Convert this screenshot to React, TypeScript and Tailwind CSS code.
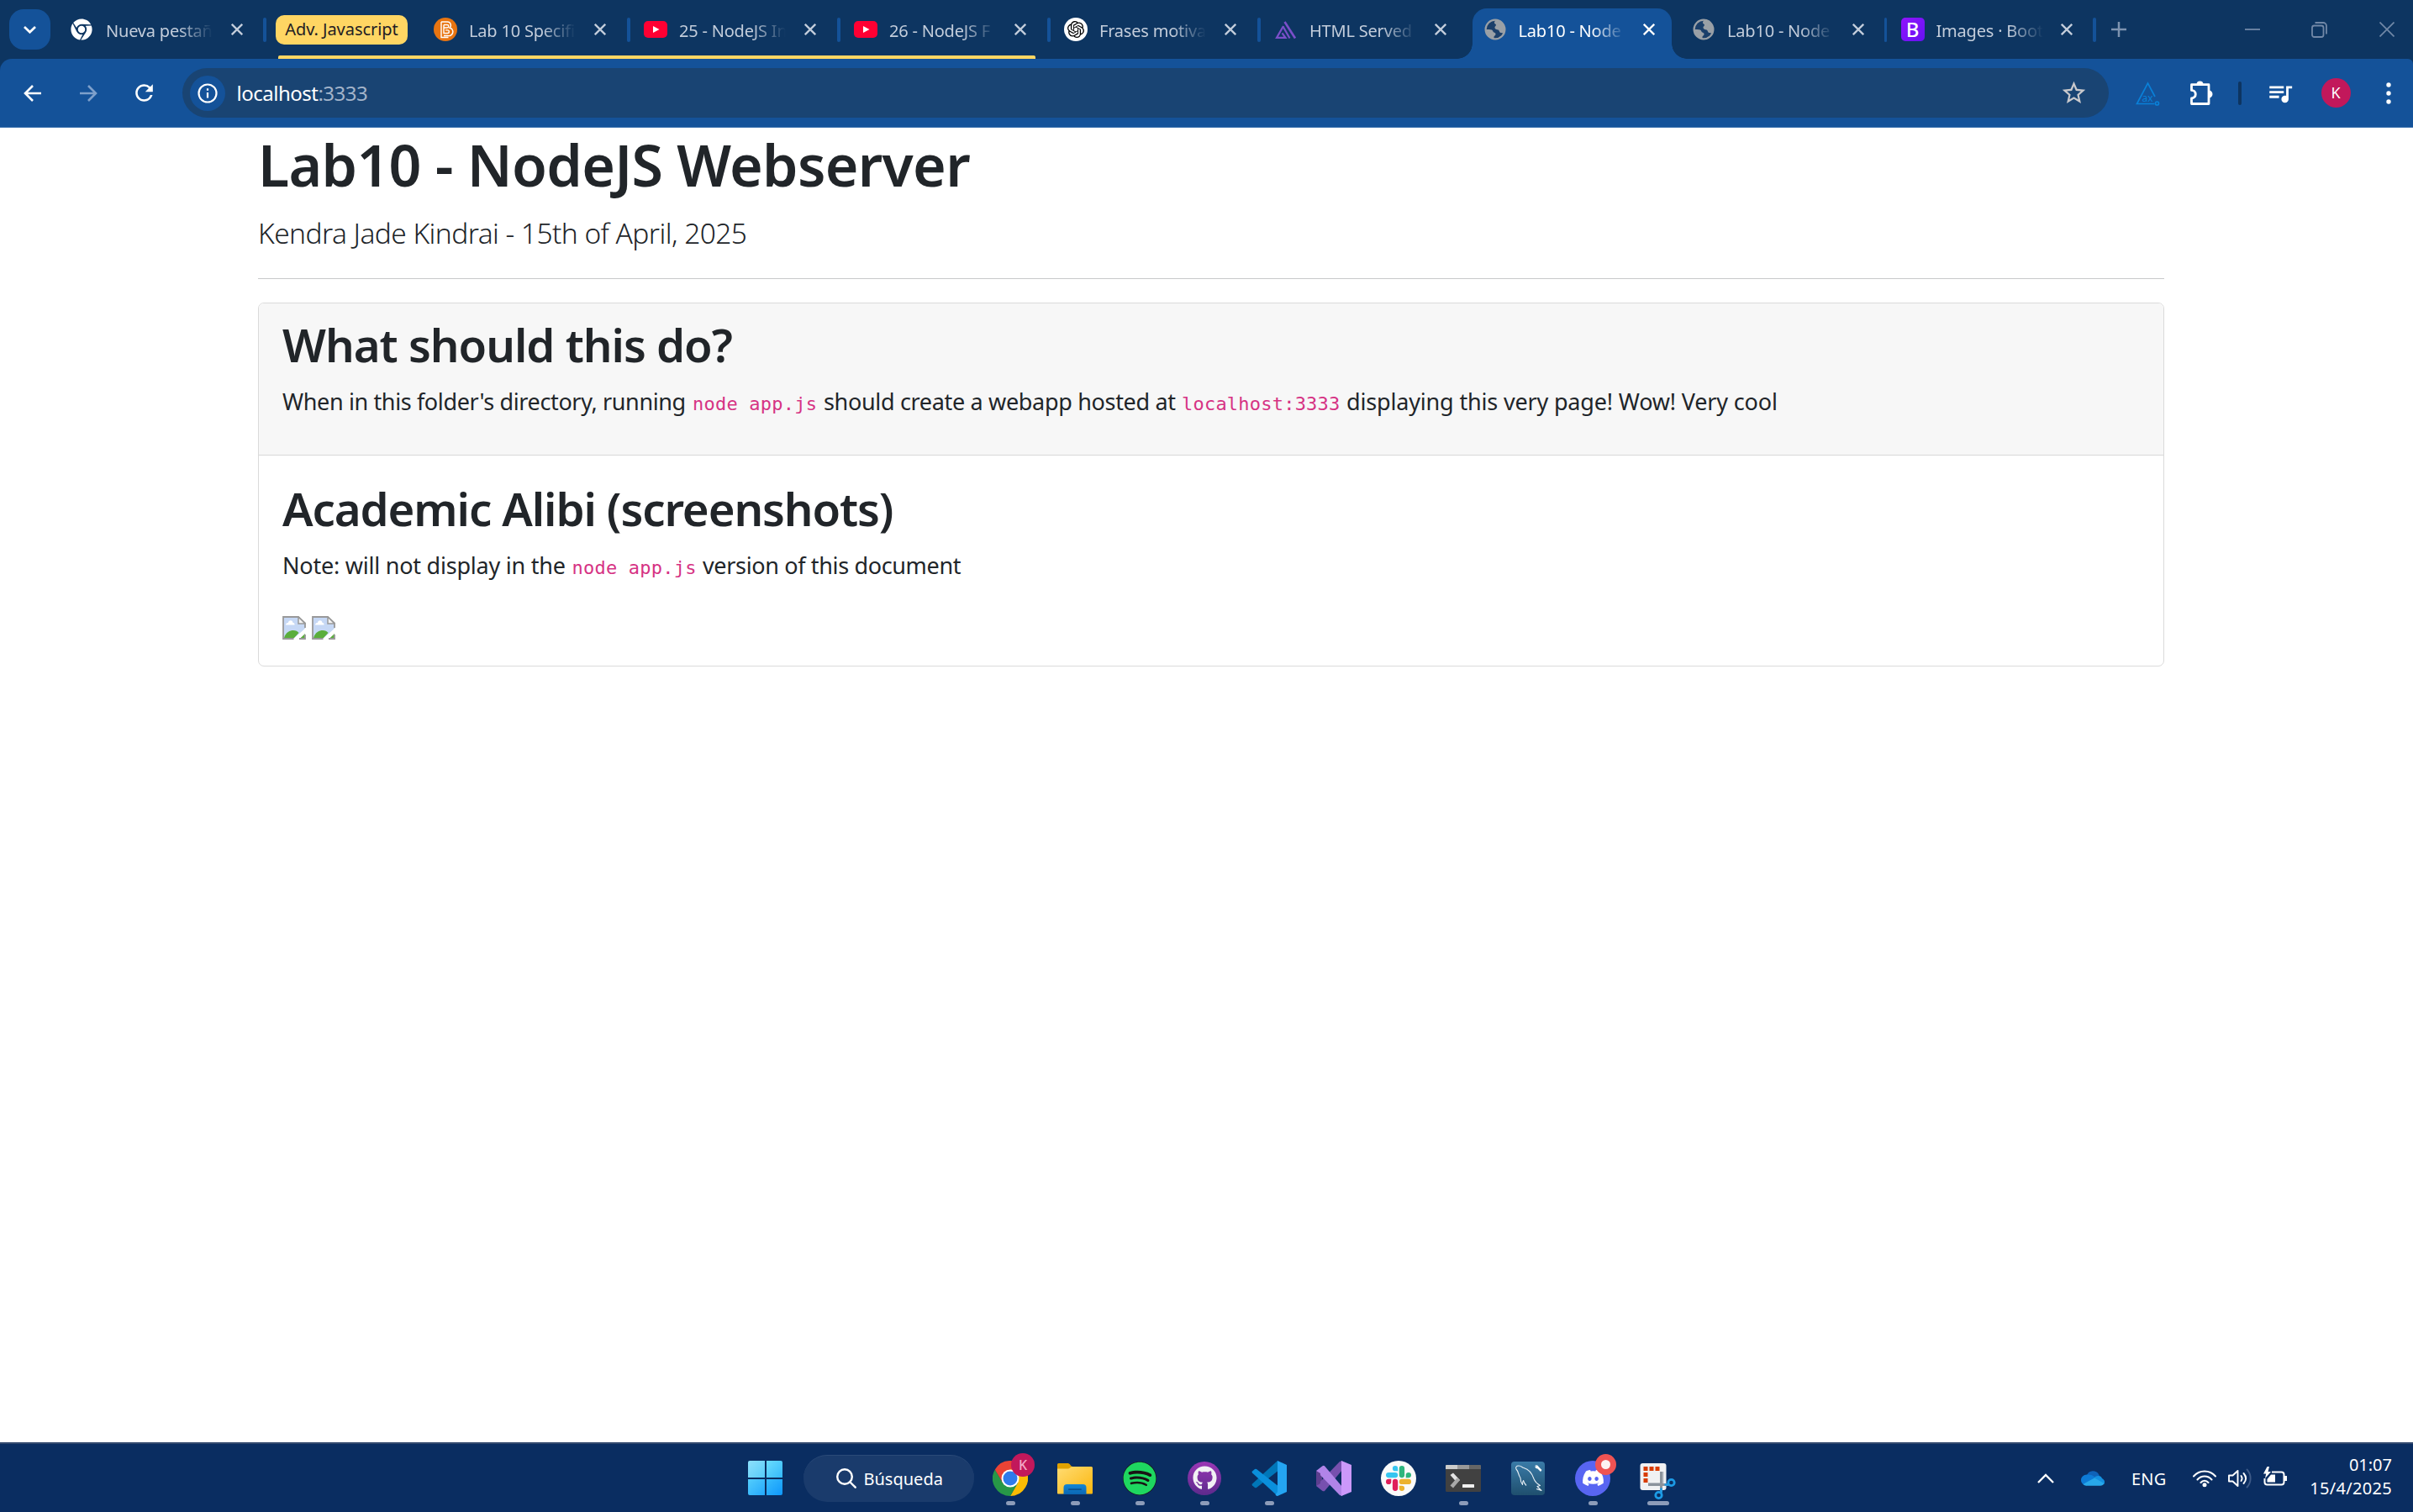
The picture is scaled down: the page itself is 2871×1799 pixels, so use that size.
import React from "react";
import { FaDiscord, FaGithub, FaSpotify, FaChrome } from "react-icons/fa";
import { SiOpenai } from "react-icons/si";
import { MdRefresh, MdStarBorder, MdQueueMusic } from "react-icons/md";

/* ---------- favicons ---------- */

const Globe = () => (
  <svg className="size-[28px]" viewBox="0 0 28 28" fill="none">
    <circle cx="14" cy="14" r="11.4" fill="#1b3f6a" stroke="#9aa0a6" strokeWidth="2.2" />
    <path d="M14.5 3C20 3 25 7.500 25 14c0 2-.6 3.600-1.300 5-1-.8-2-1-3.200-1-1.500 0-1.500-3-3-3.500-2-.5-3.500-.5-4-2.500-.3-1.500 1.500-2 1.500-3.500 0-1-2-1-2-2.500 0-1.500 1-2.500 1.500-3Z" fill="#9aa0a6" />
    <path d="M3 14c3 0 5-.4 7 .6 1.500.8 1 2.400 2.500 3 1.500.6 2.200 1 2 2.500-.2 1.500-2 1.400-2 2.900v2.300C6.500 24.500 3 19.500 3 14Z" fill="#9aa0a6" />
  </svg>
);

const ChromeMono = () => <FaChrome className="mr-[2px] size-[26px] text-white" />;

const Brightspace = () => (
  <svg className="size-[28px]" viewBox="0 0 28 28" fill="none">
    <circle cx="14" cy="14" r="14" fill="#e87511" />
    <path d="M9 5h7.500a4 4 0 0 1 2.500 7 4.600 4.600 0 0 1-2 9.500H12M9 5v18.500h8.500" stroke="#fff" strokeWidth="1.400" />
    <path d="M12 8.500h4a1.700 1.700 0 0 1 0 3.500h-4M12 8.500V18.500h4.500a1.800 1.800 0 0 0 0-3.600H14" stroke="#fff" strokeWidth="1.400" />
  </svg>
);

const YouTube = () => (
  <svg className="size-[28px]" viewBox="0 0 28 28">
    <rect y="4" width="28" height="20" rx="5" fill="#ff0033" />
    <path d="M11 10v8l7.500-4z" fill="#fff" />
  </svg>
);

const OpenAI = () => (
  <span className="flex size-[28px] items-center justify-center rounded-full bg-white">
    <SiOpenai className="size-[20px] text-black" />
  </span>
);

const Peaks = () => (
  <svg className="size-[28px]" viewBox="0 0 28 28" fill="none" stroke="#7a4fc9" strokeWidth="2.200">
    <path d="M11 10 3 23.900h10.500l-4-5.500" />
    <path d="M10.500 10.500 18.500 24.500" />
    <path d="M12.500 5 25 24.500" strokeWidth="2.600" />
  </svg>
);

const BootstrapIcon = () => (
  <span className="flex h-[28px] w-[28px] items-center justify-center rounded-[5px] bg-linear-to-br from-[#9013fe] to-[#6610f2] font-['Noto_Sans'] text-[24px] leading-none font-medium text-white">
    B
  </span>
);

const CloseX = ({ active }: { active?: boolean }) => (
  <svg className={active ? "size-[14px] text-white" : "size-[14px] text-[#c3cddb]"} viewBox="0 0 14 14" stroke="currentColor" strokeWidth="2.300">
    <path d="M0.800 0.800 13.200 13.200M13.200 0.800 0.800 13.200" />
  </svg>
);

/* ---------- tab strip ---------- */

type TabProps = {
  icon: React.ReactNode;
  title: string;
  width: string;
  sep?: boolean;
  active?: boolean;
};

function Tab({ icon, title, width, sep, active }: TabProps) {
  return (
    <div className={`relative flex h-[70px] shrink-0 items-center ${width}`}>
      {active && (
        <>
          <div className="absolute top-[10px] right-[4px] bottom-0 left-[7.500px] rounded-t-[17px] bg-[#145299]" />
          <div className="absolute bottom-0 -left-[10.500px] size-[18px] bg-[radial-gradient(circle_at_0_0,transparent_17.5px,#145299_18px)]" />
          <div className="absolute -right-[14px] bottom-0 size-[18px] bg-[radial-gradient(circle_at_100%_0,transparent_17.5px,#145299_18px)]" />
        </>
      )}
      <div className={`h-[29px] w-[3.500px] shrink-0 rounded-full ${sep ? "bg-[#145299]" : ""}`} />
      <div className="relative ml-[16.500px] flex size-[28px] shrink-0 items-center justify-center">{icon}</div>
      <div
        className={`relative ml-[14px] w-[127px] shrink-0 overflow-hidden pt-[3px] text-[20px] leading-[34px] tracking-[-0.200px] whitespace-nowrap [mask-image:linear-gradient(to_right,black_68%,transparent_100%)] ${
          active ? "text-white" : "text-[#c3cddb]"
        }`}
      >
        {title}
      </div>
      <div className="relative ml-[21.500px] flex">
        <CloseX active={active} />
      </div>
    </div>
  );
}

function TabStrip() {
  return (
    <div className="relative flex h-[70px] items-center bg-[#0d3561]">
      <div className="ml-[11px] flex h-[48px] w-[49px] shrink-0 items-center justify-center rounded-[17px] bg-[#145299]">
        <svg className="h-[9px] w-[15px]" viewBox="0 0 15 9" fill="none" stroke="#fff" strokeWidth="2.700">
          <path d="M1 1l6.500 6.300L14 1" />
        </svg>
      </div>
      <div className="w-[4px] shrink-0" />
      <Tab icon={<ChromeMono />} title="Nueva pestaña" width="w-[249px]" />
      <div className="flex w-[15px] shrink-0">
        <div className="h-[29px] w-[3.500px] rounded-full bg-[#145299]" />
      </div>
      <div className="flex h-[35px] w-[157px] shrink-0 items-center justify-center rounded-[10px] bg-[#ffd663] text-[20px] tracking-[-0.050px] whitespace-nowrap text-[#1f2023]">
        Adv. Javascript
      </div>
      <div className="w-[11px] shrink-0" />
      <Tab icon={<Brightspace />} title="Lab 10 Specifi" width="w-[250px]" />
      <Tab icon={<YouTube />} title="25 - NodeJS In" width="w-[250px]" sep />
      <Tab icon={<YouTube />} title="26 - NodeJS F" width="w-[250px]" sep />
      <Tab icon={<OpenAI />} title="Frases motiva" width="w-[250px]" sep />
      <Tab icon={<Peaks />} title="HTML Served" width="w-[248.500px]" sep />
      <Tab icon={<Globe />} title="Lab10 - Node" width="w-[248.500px]" active />
      <Tab icon={<Globe />} title="Lab10 - Node" width="w-[248.500px]" />
      <Tab icon={<BootstrapIcon />} title="Images · Boot" width="w-[248.500px]" sep />
      <div className="h-[29px] w-[3.500px] shrink-0 rounded-full bg-[#145299]" />
      <svg className="ml-[18px] size-[18px] shrink-0" viewBox="0 0 18 18" stroke="#7d93b0" strokeWidth="2.500">
        <path d="M9 0v18M0 9h18" />
      </svg>
      <div className="mr-[22px] ml-auto flex items-center">
        <svg className="size-[18px]" viewBox="0 0 18 18" stroke="#7188a7" strokeWidth="1.800">
          <path d="M0 9h18" />
        </svg>
        <svg className="ml-[61px] size-[19px]" viewBox="0 0 19 19" fill="none" stroke="#7188a7" strokeWidth="1.800">
          <rect x="1" y="4.500" width="13.500" height="13.500" rx="2.500" />
          <path d="M4.500 1h9.500a4 4 0 0 1 4 4v9.500" />
        </svg>
        <svg className="ml-[62px] size-[18px]" viewBox="0 0 18 18" stroke="#7188a7" strokeWidth="1.700">
          <path d="M.5.5l17 17M17.500.5l-17 17" />
        </svg>
      </div>
      <div className="absolute bottom-0 left-[331px] h-[4px] w-[901px] rounded-t-[2px] bg-[#ffd663]" />
    </div>
  );
}

/* ---------- toolbar ---------- */

function Toolbar() {
  return (
    <div className="bg-[#0d3561]">
      <div className="flex h-[82px] items-center rounded-tl-[14px] rounded-tr-[6px] border-b border-[#3f74b0] bg-[#145299]">
        <svg className="ml-[28px] h-[20px] w-[21px] shrink-0" viewBox="0 0 21 20" fill="none" stroke="#fff" strokeWidth="2.600">
          <path d="M21 10H2M11 1l-9 9 9 9" />
        </svg>
        <svg className="ml-[46px] h-[20px] w-[21px] shrink-0" viewBox="0 0 21 20" fill="none" stroke="#7ea0cb" strokeWidth="2.600">
          <path d="M0 10h19M10 1l9 9-9 9" />
        </svg>
        <MdRefresh className="ml-[40px] size-[31px] shrink-0 text-white" />
        <div className="ml-[30px] flex h-[59px] w-[2292px] shrink-0 items-center rounded-full bg-[#194473]">
          <div className="ml-[9px] flex size-[42px] items-center justify-center rounded-full bg-[#145299]">
            <svg className="size-[24px]" viewBox="0 0 24 24" fill="none" stroke="#fff" strokeWidth="2.200">
              <circle cx="12" cy="12" r="10.500" />
              <path d="M12 11v6.500M12 6.300v2.500" />
            </svg>
          </div>
          <div className="ml-[13.500px] text-[24px] tracking-[-0.500px] text-white">
            localhost<span className="text-[#a3b4ca]">:3333</span>
          </div>
          <MdStarBorder className="mr-[25px] ml-auto size-[33px] text-[#c9c9cc]" />
        </div>
        <svg className="ml-[32px] size-[30px] shrink-0" viewBox="0 0 30 30" fill="none" stroke="#0a80d8" strokeWidth="1.700">
          <path d="M23 19 14.500 3 1.500 27.500h21" />
          <circle cx="25.500" cy="27" r="2" />
          <text x="7.500" y="24.500" fontSize="12" fill="#0a80d8" stroke="none" fontFamily="Noto Sans">ax</text>
        </svg>
        <svg className="ml-[33px] h-[30px] w-[30px] shrink-0" viewBox="0 0 30 30" fill="none">
          <path d="M3.500 11.400V4.700H24V27.500H3.500V21a4.800 4.800 0 0 0 0-9.600Z" stroke="#fff" strokeWidth="2.800" strokeLinejoin="round" />
          <path d="M9.500 4.500a4 4 0 0 1 8 0ZM24 11.500a4.500 4.500 0 0 1 0 9Z" fill="#fff" />
        </svg>
        <div className="ml-[29px] h-[28px] w-[3.500px] shrink-0 rounded-full bg-[#0d3561]" />
        <MdQueueMusic className="ml-[29px] size-[34px] shrink-0 text-white" />
        <div className="ml-[32px] flex size-[35px] shrink-0 items-center justify-center rounded-full bg-[#c2185b] text-[18px] text-white">K</div>
        <svg className="ml-[42px] h-[26px] w-[6px] shrink-0" viewBox="0 0 6 26" fill="#fff">
          <circle cx="3" cy="3" r="2.700" />
          <circle cx="3" cy="13" r="2.700" />
          <circle cx="3" cy="23" r="2.700" />
        </svg>
      </div>
    </div>
  );
}

/* ---------- page ---------- */

const Code = ({ children, className }: { children: string; className: string }) => (
  <code className={`font-['DejaVu_Sans_Mono'] text-[22px] leading-none tracking-[0.220px] text-[#d63384] ${className}`}>{children}</code>
);

const BrokenImage = () => (
  <svg className="size-[28px]" viewBox="0 0 28 28">
    <path d="M1 1h18l8 8v6L14 27H1Z" fill="#c6d8f5" />
    <path d="M4 10.500c0-2 2-2.500 3-2.500 0-3 5-4 5.500 0 2 0 2 1 2 2.500Z" fill="#fff" />
    <path d="M2 26c2-7 7-9 11-9 3 0 5 1 6.500 3L14 26Z" fill="#5aae3c" />
    <path d="M21 26l6-6v6Z" fill="#5aae3c" />
    <path d="M12 28 28 14v6L19.500 28Z" fill="#fff" />
    <path d="M27 14V8.500L19 1H1v26h12.500M20 27h7v-5" fill="none" stroke="#999" strokeWidth="1.800" />
    <path d="M19 1v8h8Z" fill="#f4f4f4" stroke="#999" strokeWidth="1.500" />
  </svg>
);

function Page() {
  return (
    <main className="h-[1564px] bg-white pl-[307px] text-[#212529]">
      <div className="w-[2268px] pt-[2px]">
        <h1 className="text-[68px] leading-[84px] font-semibold tracking-[-0.700px] whitespace-nowrap">Lab10 - NodeJS Webserver</h1>
        <p className="mt-[13px] text-[33.500px] leading-[52px] font-light tracking-[-0.560px] whitespace-nowrap">
          Kendra Jade Kindrai - 15th of April, 2025
        </p>
        <hr className="mt-[28px] h-px border-0 bg-[#c8c9ca]" />
        <section className="mt-[28px] h-[433px] overflow-hidden rounded-[7px] border border-[#dadada]">
          <header className="h-[181px] border-b border-[#d8d8d8] bg-[#f7f7f7] px-[28px] pt-[15px]">
            <h2 className="text-[54.500px] leading-[68px] font-semibold tracking-[-1px] whitespace-nowrap">What should this do?</h2>
            <p className="mt-[13px] flex h-[42px] items-baseline text-[27px] leading-[42px] whitespace-nowrap">
              <span className="w-[488px] tracking-[-0.370px]">When in this folder's directory, running</span>
              <Code className="w-[156px]">node app.js</Code>
              <span className="w-[426px] tracking-[-0.330px]">should create a webapp hosted at</span>
              <Code className="w-[196px]">localhost:3333</Code>
              <span className="tracking-[-0.170px]">displaying this very page! Wow! Very cool</span>
            </p>
          </header>
          <div className="px-[28px] pt-[29px]">
            <h2 className="text-[54.500px] leading-[68px] font-semibold tracking-[-1.100px] whitespace-nowrap">Academic Alibi (screenshots)</h2>
            <p className="mt-[13px] flex h-[42px] items-baseline text-[27px] leading-[42px] whitespace-nowrap">
              <span className="w-[344.500px] tracking-[-0.230px]">Note: will not display in the</span>
              <Code className="w-[155.500px]">node app.js</Code>
              <span className="tracking-[-0.350px]">version of this document</span>
            </p>
            <div className="mt-[39px] flex gap-[7px]">
              <BrokenImage />
              <BrokenImage />
            </div>
          </div>
        </section>
      </div>
    </main>
  );
}

/* ---------- taskbar ---------- */

const Chrome = () => (
  <div className="relative size-[42px]">
    <svg className="size-[42px]" viewBox="0 0 42 42">
      <path d="M21 21 2.800 10.500A21 21 0 0 1 39.200 10.500Z" fill="#ea4335" />
      <path d="M21 10.500H39.200A21 21 0 0 1 21 42L30 26.200Z" fill="#fbbc04" />
      <path d="M2.800 10.500A21 21 0 0 0 21 42L30.100 26.300 12 26.300Z" fill="#279847" />
      <path d="M2.800 10.500 12 26.300 21 10.500Z" fill="#ea4335" />
      <circle cx="21" cy="21" r="10.500" fill="#fff" />
      <circle cx="21" cy="21" r="8.500" fill="#2f7bec" />
    </svg>
    <div className="absolute top-[-9px] left-[22px] flex size-[28px] items-center justify-center rounded-full bg-[#c2185b] text-[16px] font-medium text-[#f3a9c6]">
      K
    </div>
  </div>
);

const Folder = () => (
  <svg className="h-[38px] w-[42px]" viewBox="0 0 42 38">
    <defs>
      <linearGradient id="folder" x1="0" y1="0" x2="1" y2="1">
        <stop stopColor="#ffdc73" />
        <stop offset="1" stopColor="#fbb70f" />
      </linearGradient>
      <linearGradient id="folderTray" x1="0" y1="0" x2="0" y2="1">
        <stop stopColor="#1487d4" />
        <stop offset="1" stopColor="#0a66b4" />
      </linearGradient>
    </defs>
    <path d="M0 2.500A1.500 1.500 0 0 1 1.500 1h11c3 0 3 4 6 4V10H0Z" fill="#e0a100" />
    <path d="M0 7.500h13c2 0 2.500-2.500 4.500-2.500h23A1.500 1.500 0 0 1 42 6.500V36.500a1 1 0 0 1-1 1H1a1 1 0 0 1-1-1Z" fill="url(#folder)" />
    <path d="M7.500 38V30a4 4 0 0 1 4-4h19a4 4 0 0 1 4 4v8Z" fill="url(#folderTray)" />
    <rect x="13" y="31.200" width="16" height="1.800" rx=".9" fill="#0a5292" />
  </svg>
);

const Spotify = () => (
  <span className="flex size-[40px] items-center justify-center rounded-full bg-[#191414]">
    <FaSpotify className="size-[40px] text-[#1ed760]" />
  </span>
);

const GitHub = () => (
  <span className="flex size-[40px] items-center justify-center rounded-full bg-linear-to-b from-[#9a37b5] to-[#5d2a8c]">
    <FaGithub className="size-[29px] text-[#f1f1f4]" />
  </span>
);

const VSCode = () => (
  <svg className="size-[42px]" viewBox="0 0 42 42">
    <path d="M31 0 1 27.500a1.500 1.500 0 0 0 0 2L4 32q1 .6 2 0L31 12.500Z" fill="#0076b8" />
    <path d="M31 42 1 14.500a1.500 1.500 0 0 1 0-2L4 10q1-.6 2 0L31 29.500Z" fill="#0a8fdc" />
    <path d="M31 0 42 5V37L31 42q-2-.5-2.500-1.500L31 37Z" fill="#24a5f2" />
  </svg>
);

const VisualStudio = () => (
  <svg className="size-[42px]" viewBox="0 0 42 42">
    <path d="M0 12 7 16V26L0 30Z" fill="#5d3f8f" />
    <path d="M0 30 7.500 36Q9 36.500 10 36L31 11V0L28 1Z" fill="#7750ae" />
    <path d="M0 12 7.500 6.200Q9 5.500 10 6.200L31 31V42L28 41Z" fill="#b184e8" />
    <path d="M0 12v18l5-3V15Z" fill="#5d3f8f" />
    <path d="M30 0 42 5V37L30 42Z" fill="#cb98fa" />
  </svg>
);

const Slack = () => (
  <span className="flex size-[42px] items-center justify-center rounded-full bg-[#fafafa]">
    <svg className="size-[30px]" viewBox="0 0 24 24">
      <path fill="#e01e5a" d="M5.042 15.165a2.528 2.528 0 0 1-2.520 2.523A2.528 2.528 0 0 1 0 15.165a2.527 2.527 0 0 1 2.522-2.520h2.520zM6.313 15.165a2.527 2.527 0 0 1 2.521-2.520 2.527 2.527 0 0 1 2.521 2.520v6.313A2.528 2.528 0 0 1 8.834 24a2.528 2.528 0 0 1-2.521-2.522z" />
      <path fill="#36c5f0" d="M8.834 5.042a2.528 2.528 0 0 1-2.521-2.520A2.528 2.528 0 0 1 8.834 0a2.528 2.528 0 0 1 2.521 2.522v2.520zM8.834 6.313a2.528 2.528 0 0 1 2.521 2.521 2.528 2.528 0 0 1-2.521 2.521H2.522A2.528 2.528 0 0 1 0 8.834a2.528 2.528 0 0 1 2.522-2.521z" />
      <path fill="#2eb67d" d="M18.956 8.834a2.528 2.528 0 0 1 2.522-2.521A2.528 2.528 0 0 1 24 8.834a2.528 2.528 0 0 1-2.522 2.521h-2.522zM17.688 8.834a2.528 2.528 0 0 1-2.523 2.521 2.527 2.527 0 0 1-2.520-2.521V2.522A2.527 2.527 0 0 1 15.165 0a2.528 2.528 0 0 1 2.523 2.522z" />
      <path fill="#ecb22e" d="M15.165 18.956a2.528 2.528 0 0 1 2.523 2.522A2.528 2.528 0 0 1 15.165 24a2.527 2.527 0 0 1-2.520-2.522v-2.522zM15.165 17.688a2.527 2.527 0 0 1-2.520-2.523 2.526 2.526 0 0 1 2.520-2.520h6.313A2.527 2.527 0 0 1 24 15.165a2.528 2.528 0 0 1-2.522 2.523z" />
    </svg>
  </span>
);

const Terminal = () => (
  <svg className="h-[32px] w-[42px]" viewBox="0 0 42 32">
    <rect width="42" height="32" rx="1.500" fill="#414141" />
    <path d="M0 5V1Q0 0 1 0H14V5Z" fill="#cccccc" />
    <path d="M14 0H28V5H14Z" fill="#999" />
    <path d="M28 0H41Q42 0 42 1V5H28Z" fill="#666" />
    <path d="M5.500 12 9 9.500 17 18l-3.500 3Z" fill="#e4e4e4" />
    <path d="M13.500 15.500 17 18 9 27.500 5.500 24.500Z" fill="#a9a9a9" />
    <rect x="20" y="23" width="14" height="4" rx=".5" fill="#f0f0f0" />
  </svg>
);

const MySQL = () => (
  <svg className="size-[40px]" viewBox="0 0 40 40" fill="none">
    <defs>
      <linearGradient id="mysql" x1="0" y1="0" x2="0" y2="1">
        <stop stopColor="#3a7ba8" />
        <stop offset="1" stopColor="#1f4f6e" />
      </linearGradient>
    </defs>
    <rect width="40" height="40" rx="4" fill="url(#mysql)" />
    <path d="M18 28.500c-1.500-1.500-3-4-3.500-6-1 1.500-1 3.500-1 5-2.500-3-2.500-6-2.500-8C8 15 9 12 6 9c-1-2 0-4 3-4 3 0 4 2 6 2.500 7 2 10 7 12 13 1.500 4 3 5.500 7.500 8l-3.500 1 5 5c-3-1.500-4.500-1.500-6-2" stroke="#e6eef4" strokeWidth="1.100" strokeLinejoin="round" />
    <path d="M28.500 4.500q3-1 4.500 2l3.500 3.500-1.500 2-3.500-3.500q-3-.5-3.500-3l2 .5Z" fill="#fff" />
  </svg>
);

const Discord = () => (
  <div className="relative size-[42px]">
    <div className="flex size-[42px] items-center justify-center rounded-full bg-[#5865f2]">
      <FaDiscord className="size-[27px] text-white" />
    </div>
    <div className="absolute top-[-7.500px] left-[24px] flex size-[25px] items-center justify-center rounded-full bg-[#ee5353]">
      <div className="size-[11px] rounded-full bg-[#fdf3f3]" />
    </div>
  </div>
);

const Snip = () => (
  <svg className="mt-[8px] h-[44px] w-[43px]" viewBox="0 0 43 44" fill="none">
    <rect x=".5" width="31" height="32" rx="3" fill="#f0f1f3" />
    <path d="M10 24.500h17V10" stroke="#b9bfc6" strokeWidth="3" />
    <g fill="#d83b01">
      <rect x="4.500" y="4" width="5" height="5" />
      <rect x="11.500" y="4" width="5" height="5" />
      <rect x="18.500" y="4" width="5" height="5" />
      <rect x="4.500" y="11" width="5" height="5" />
      <rect x="4.500" y="18" width="5" height="5" />
    </g>
    <path d="M25.500 10V34M10 25.500h24" stroke="#8b939c" strokeWidth="3" />
    <circle cx="22.500" cy="38" r="3.700" stroke="#1c9be6" strokeWidth="2.800" />
    <circle cx="37.500" cy="23" r="3.700" stroke="#1c9be6" strokeWidth="2.800" />
    <path d="M25.500 29.500v6M29.500 25.500h5" stroke="#1c9be6" strokeWidth="2.600" />
  </svg>
);

function TaskButton({ children, mark }: { children: React.ReactNode; mark?: "dot" | "wide" }) {
  return (
    <div className="relative flex h-[81px] w-[77px] shrink-0 items-center justify-center">
      {children}
      {mark === "dot" && <div className="absolute bottom-[8px] left-[33px] h-[5px] w-[11px] rounded-full bg-[#8d9cb9]" />}
      {mark === "wide" && <div className="absolute bottom-[8px] left-[26px] h-[5px] w-[26px] rounded-full bg-[#8d9cb9]" />}
    </div>
  );
}

function Taskbar() {
  return (
    <footer className="flex h-[83px] items-center border-t-2 border-[#33496e] bg-[#0a2d61] pr-[25px] pl-[890px] text-[20px] text-white">
      <div className="grid size-[41px] shrink-0 grid-cols-2 gap-[2px]">
        <div className="rounded-tl-[2px] bg-linear-to-br from-[#8ce0fc] to-[#55cbf9]" />
        <div className="rounded-tr-[2px] bg-linear-to-br from-[#69dcfd] to-[#33b9fb]" />
        <div className="rounded-bl-[2px] bg-linear-to-br from-[#52cdfc] to-[#22a8fb]" />
        <div className="rounded-br-[2px] bg-linear-to-br from-[#36bcfc] to-[#0d97fb]" />
      </div>
      <div className="ml-[25px] flex h-[56px] w-[203px] shrink-0 items-center rounded-full border-t border-[#2b4a78] bg-[#1a3b6c]">
        <svg className="ml-[39px] size-[24px]" viewBox="0 0 24 24" fill="none" stroke="#fff" strokeWidth="2.400" strokeLinecap="round">
          <circle cx="10" cy="10" r="8.800" />
          <path d="M16.500 16.500l6.200 6.200" />
        </svg>
        <span className="ml-[8.500px] pt-px">Búsqueda</span>
      </div>
      <div className="ml-[4.500px] flex shrink-0">
        <TaskButton mark="dot"><Chrome /></TaskButton>
        <TaskButton mark="dot"><Folder /></TaskButton>
        <TaskButton mark="dot"><Spotify /></TaskButton>
        <TaskButton mark="dot"><GitHub /></TaskButton>
        <TaskButton mark="dot"><VSCode /></TaskButton>
        <TaskButton><VisualStudio /></TaskButton>
        <TaskButton><Slack /></TaskButton>
        <TaskButton mark="dot"><Terminal /></TaskButton>
        <TaskButton><MySQL /></TaskButton>
        <TaskButton mark="dot"><Discord /></TaskButton>
        <TaskButton mark="wide"><Snip /></TaskButton>
      </div>
      <div className="ml-auto flex items-center">
        <svg className="h-[12px] w-[20px]" viewBox="0 0 20 12" fill="none" stroke="#fff" strokeWidth="2.300">
          <path d="M1 11l9-9 9 9" />
        </svg>
        <svg className="ml-[32px] h-[19px] w-[28px]" viewBox="0 0 28 19">
          <path d="M7 6a8 8 0 0 1 14-1l2 4-12 3Z" fill="#0f62b8" />
          <path d="M7 5.500C3 5.500 0 8.500 0 12s3 6.500 6.500 6.500L17 9C14 6 10.500 5 7 5.500Z" fill="#0d7bd6" />
          <path d="M15 10.500C17 6 24 6 25 10c4 2 3.500 6 2 7Z" fill="#1490e0" />
          <path d="M2.500 17C7 14 12 12 16 9.500L27.500 16c-1 2-2.500 2.700-4.500 2.700H6.500Q4 18.500 2.500 17Z" fill="#28a8ea" />
        </svg>
        <span className="ml-[32px] w-[41px] pt-[2px] tracking-[0.200px]">ENG</span>
        <svg className="ml-[32px] h-[22px] w-[28px]" viewBox="0 0 28 22" fill="none" stroke="#fff" strokeWidth="2" strokeLinecap="round">
          <path d="M1 8.500C8 .5 20 .5 27 8.500M5.500 12.500c4.500-5.500 12.500-5.500 17 0M9.500 16c2.500-3 6.500-3 9 0" />
          <circle cx="14" cy="18.800" r="1.500" fill="#fff" />
        </svg>
        <svg className="ml-[14px] h-[24px] w-[28px]" viewBox="0 0 28 24" fill="none" stroke="#fff" strokeWidth="1.900" strokeLinecap="round" strokeLinejoin="round">
          <path d="M1 8.500h4.500L11.500 3v18l-6-5.500H1Z" />
          <path d="M15.500 9c1.500 2 1.500 4 0 6M18.500 6c3.500 4 3.500 8 0 12" />
          <path d="M22.500 1.500c5.500 6 5.500 15 0 21" stroke="#3e5a87" />
        </svg>
        <svg className="mb-[4px] ml-[14px] h-[24px] w-[28px]" viewBox="0 0 28 24" fill="none" stroke="#fff" strokeWidth="2">
          <path d="M10 6.500h11.500a3 3 0 0 1 3 3v9a3 3 0 0 1-3 3h-17a3 3 0 0 1-3-3V14" />
          <path d="M4.500 15 9 9.500h5V18.500H4.500Z" fill="#fff" stroke="none" />
          <path d="M26.500 11v6" strokeWidth="3" />
          <path d="M4.500 0 0 8.500h3.200L2 14l7-8H5.500L7 0Z" fill="#fff" stroke="none" />
        </svg>
        <div className="mb-[3px] w-[125px] text-right leading-[28px]">
          <div>01:07</div>
          <div className="tracking-[0.300px]">15/4/2025</div>
        </div>
      </div>
    </footer>
  );
}

export default function App() {
  return (
    <div className="w-[2871px] overflow-hidden bg-white font-['Noto_Sans',sans-serif]">
      <TabStrip />
      <Toolbar />
      <Page />
      <Taskbar />
    </div>
  );
}
